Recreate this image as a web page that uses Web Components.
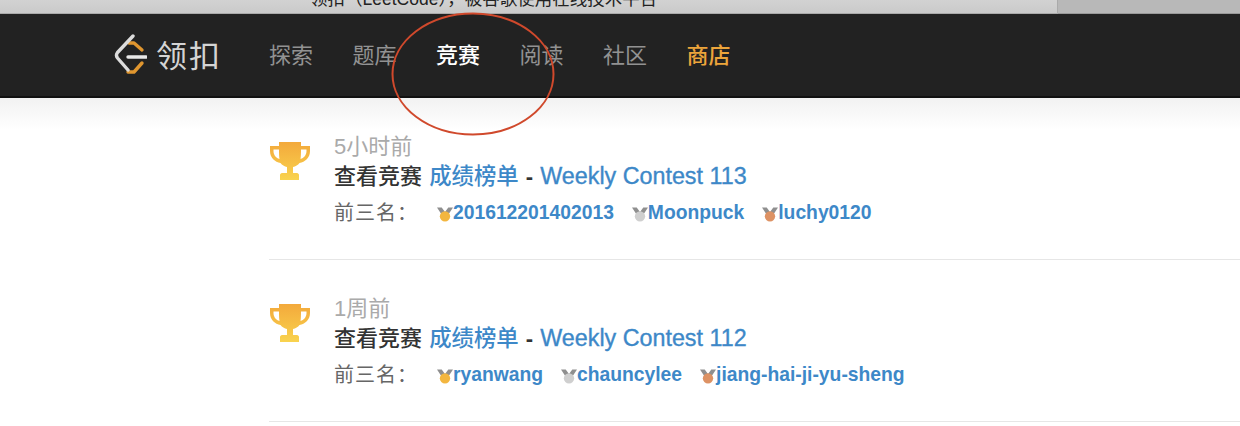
<!DOCTYPE html>
<html lang="zh"><head><meta charset="utf-8">
<style>
html,body{margin:0;padding:0;background:#fff;height:426px;overflow:hidden}
body{font-family:"Liberation Sans","Noto Sans CJK SC",sans-serif}
</style></head><body>
<lc-topstrip></lc-topstrip>
<lc-nav></lc-nav>
<lc-feed>
<lc-contest time="5小时前" name="Weekly Contest 113" u1="201612201402013" u2="Moonpuck" u3="luchy0120"></lc-contest>
<lc-contest time="1周前" name="Weekly Contest 112" u1="ryanwang" u2="chauncylee" u3="jiang-hai-ji-yu-sheng"></lc-contest>
</lc-feed>
<script>
const FONT='"Liberation Sans","Noto Sans CJK SC",sans-serif';
class Top extends HTMLElement{constructor(){super();this.attachShadow({mode:'open'}).innerHTML=`
<style>:host{display:flex;height:14px;overflow:hidden;font:17.500px/14px ${FONT};color:#222}
.a{width:1058px;background:linear-gradient(#d2d2d2,#cacaca);border-bottom:1px solid #aaa;box-sizing:border-box;border-right:1px solid #aaa;padding-left:310px;overflow:hidden}
.a span{display:block;margin-top:-8px;white-space:nowrap}
.b{flex:1;background:#b8b8b8;border-bottom:1px solid #999;box-sizing:border-box}</style>
<div class="a"><span>领扣（LeetCode），被谷歌使用在线技术平台</span></div><div class="b"></div>`}}
customElements.define('lc-topstrip',Top);
class Nav extends HTMLElement{constructor(){super();this.attachShadow({mode:'open'}).innerHTML=`
<style>:host{display:flex;position:relative;height:84px;box-sizing:border-box;background:#222;border-bottom:2px solid #111;align-items:center;padding:0 0 3px 114px;font:22px/30px "Noto Sans CJK SC",sans-serif;color:#929292}
.logo{display:flex;align-items:center;gap:9px;width:155px;color:#d4d4d4;font-size:31px;font-weight:400;letter-spacing:2px;white-space:nowrap}
.items{display:flex;gap:39.500px;margin-top:-2px}
.on{color:#fff;font-weight:500}.shop{color:#eda53b;font-weight:500}
.ring{position:absolute;left:391px;top:-1px;width:164px;height:122px;overflow:visible;pointer-events:none}
</style>
<div class="logo"><svg width="33" height="40" viewBox="0 0 33 40" fill="none" stroke-linecap="round" stroke-linejoin="round"><path d="M15 9h5l8 7M14 38h6l8-9" stroke="#e0962f" stroke-width="3.400"/><path d="M19 2 3.500 18.500c-1.500 2-1.500 3.500 0 5.500L14 36" stroke="#dcdcdc" stroke-width="3.400"/><path d="M14 23h18" stroke="#e8e8e8" stroke-width="3.400"/></svg><span>领扣</span></div>
<div class="items"><span>探索</span><span>题库</span><span class="on">竞赛</span><span>阅读</span><span>社区</span><span class="shop">商店</span></div>
<svg class="ring" viewBox="0 0 164 122" fill="none"><ellipse cx="82" cy="61" rx="80.500" ry="60.500" stroke="#d0492c" stroke-width="2"/></svg>`}}
customElements.define('lc-nav',Nav);
class Feed extends HTMLElement{constructor(){super();this.attachShadow({mode:'open'}).innerHTML=`
<style>:host{display:block;padding:0 0 0 269px;height:328px;box-sizing:border-box;background:linear-gradient(#f2f2f2,#fff 32px)}</style><slot></slot>`}}
customElements.define('lc-feed',Feed);
const TROPHY=`<svg width="42" height="42" viewBox="0 0 42 42"><defs><linearGradient id="g" x1="0" y1="0" x2="0" y2="1"><stop offset="0" stop-color="#f3a93b"/><stop offset="1" stop-color="#f9d34f"/></linearGradient></defs><path fill="url(#g)" d="M10 3h22v4h9v5c0 7-5 11-10.500 12-1.500 2-4 3.500-6.500 4V34h4c1 0 2 1 2 2v5H11v-5c0-1 1-2 2-2h5v-6c-2.500-.5-5-2-6.500-4C6 23 1 19 1 12V7h9zM4.500 10.500V12c0 4 2.500 7 6 8-.4-2-.5-5-.5-9.500zm33 0H32c0 4.500-.1 7.500-.5 9.500 3.500-1 6-4 6-8z"/></svg>`;
const medal=(c)=>`<svg width="16" height="17" viewBox="0 0 17 17"><path d="M0 2h5l3.500 5L12 2h5l-4.500 7h-8z" fill="#8f8f8f"/><circle cx="8.500" cy="11.500" r="5.500" fill="${c}"/></svg>`;
class Contest extends HTMLElement{constructor(){super();const g=n=>this.getAttribute(n);const r=this.attachShadow({mode:'open'});
r.innerHTML=`<style>:host{display:flex;height:162px;box-sizing:border-box;border-bottom:1px solid #e6e6e6;padding-top:38px;font:22px/30px "Liberation Sans","Noto Sans CJK SC",sans-serif;color:#555}
.ic{width:65px;flex:none;margin-top:3px;height:42px}
.t{color:#aaa;line-height:22px;height:22px}
.h{color:#333;font-weight:500;margin-top:3px;height:30px;white-space:nowrap}
.h b{font-weight:700;margin-left:1px}
a{color:#3d88c8;text-decoration:none;font-weight:500}
.c{font-size:22.400px;margin-left:1px}
.w{font-size:23.300px;margin-left:1px;-webkit-text-stroke:.35px #3d88c8}
.r{display:flex;align-items:center;margin-top:7px;height:30px;font-size:20px;white-space:nowrap}
.l{width:103px;letter-spacing:1px;color:#666}
.u{display:inline-flex;align-items:center;margin-right:18px;font-size:19.300px;font-weight:700;color:#3d88c8}</style>
<div class="ic">${TROPHY}</div><div><div class="t">${g('time')}</div>
<div class="h">查看竞赛 <a class="c">成绩榜单</a> <b>-</b> <a class="w">${g('name')}</a></div>
<div class="r"><span class="l">前三名：</span><span class="u">${medal('#f3b63f')}${g('u1')}</span><span class="u">${medal('#cfcfcf')}${g('u2')}</span><span class="u">${medal('#dd9264')}${g('u3')}</span></div></div>`}}
customElements.define('lc-contest',Contest);
</script></body></html>
